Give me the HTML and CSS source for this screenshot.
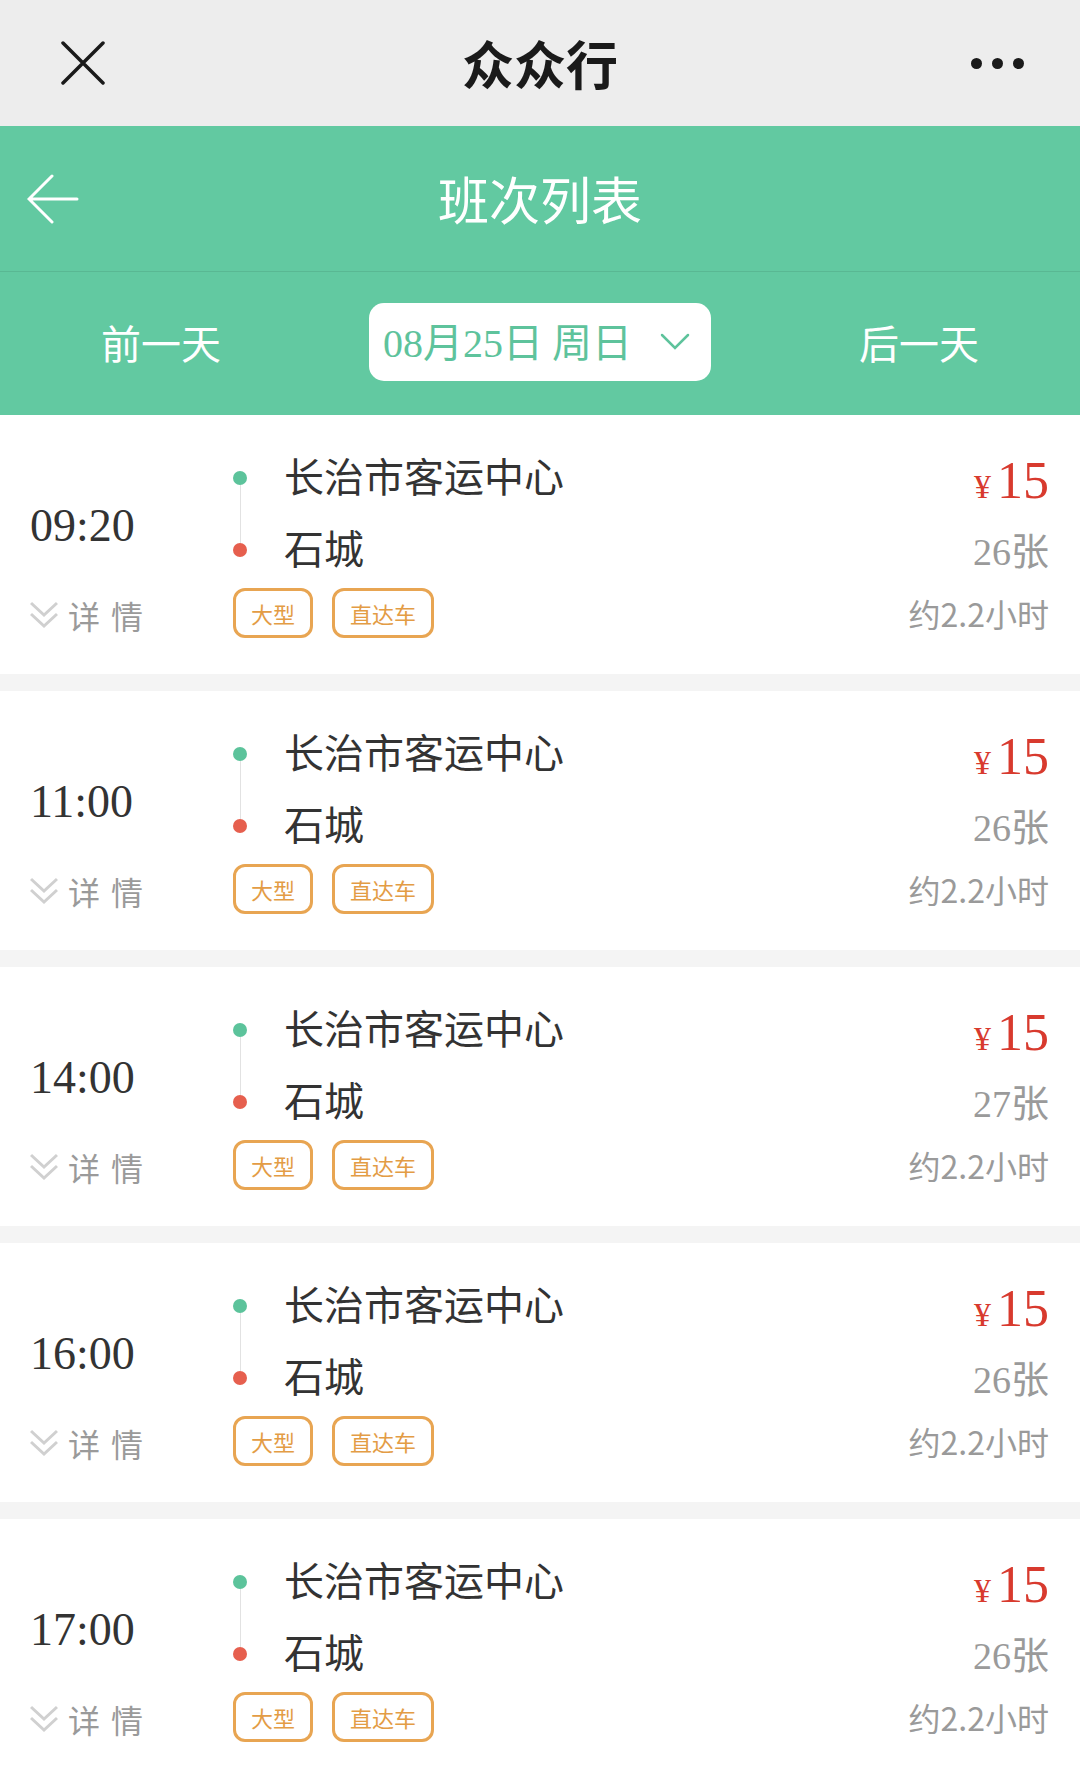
FILE: index.html
```html
<!DOCTYPE html>
<html lang="zh-CN">
    <head>
        <meta charset="UTF-8">
        <title>众众行</title>
        <link rel="stylesheet" href="styles.css">
    </head>

    <body>
        <div class="topbar">
            <svg class="close-icon" width="44" height="44" viewBox="0 0 44 44">
                <path d="M2 2 L42 42 M42 2 L2 42" stroke="#1a1a1a" stroke-width="3.5" stroke-linecap="round"/>
            </svg>
            <div class="app-title">众众行</div>
            <div class="more"><span></span><span></span><span></span></div>
        </div>

        <div class="header">
            <svg class="back" width="52" height="50" viewBox="0 0 52 50">
                <path d="M50 25 H3 M25 2 L2 25 L25 48" fill="none" stroke="#fff" stroke-width="3" stroke-linecap="round"/>
            </svg>
            <h1>班次列表</h1>
            <div></div>
        </div>

        <div class="datebar">
            <span class="day-link">前一天</span>
            <div class="date-pill">
                <span class="date-text"><span class="num">08</span>月<span class="num">25</span>日 周日</span>
                <svg width="30" height="18" viewBox="0 0 30 18">
                    <polyline points="2,2 15,15 28,2" fill="none" stroke="#5ec39c" stroke-width="2.5" stroke-linecap="round"/>
                </svg>
            </div>
            <span class="day-link">后一天</span>
        </div>

        <div class="list">
            <div class="trip">
                <div class="trip-left">
                    <div class="depart">09:20</div>
                    <div class="detail">
                        <svg width="28" height="28" viewBox="0 0 28 28"><path d="M1 2 L14 14 L27 2 M1 13 L14 25 L27 13" fill="none" stroke="#d0d0d0" stroke-width="3"/></svg>
                        <span>详情</span>
                    </div>
                </div>
                <div class="trip-mid">
                    <div class="route">
                        <div class="track"><i class="dot dot-start"></i><i class="track-line"></i><i class="dot dot-end"></i></div>
                        <div class="stops">
                            <div class="stop">长治市客运中心</div>
                            <div class="stop">石城</div>
                        </div>
                    </div>
                    <div class="tags"><span class="tag">大型</span><span class="tag">直达车</span></div>
                </div>
                <div class="trip-right">
                    <div class="price"><span class="yen">¥</span>15</div>
                    <div class="seats"><span class="num">26</span>张</div>
                    <div class="duration">约2.2小时</div>
                </div>
            </div>

            <div class="trip">
                <div class="trip-left">
                    <div class="depart">11:00</div>
                    <div class="detail">
                        <svg width="28" height="28" viewBox="0 0 28 28"><path d="M1 2 L14 14 L27 2 M1 13 L14 25 L27 13" fill="none" stroke="#d0d0d0" stroke-width="3"/></svg>
                        <span>详情</span>
                    </div>
                </div>
                <div class="trip-mid">
                    <div class="route">
                        <div class="track"><i class="dot dot-start"></i><i class="track-line"></i><i class="dot dot-end"></i></div>
                        <div class="stops">
                            <div class="stop">长治市客运中心</div>
                            <div class="stop">石城</div>
                        </div>
                    </div>
                    <div class="tags"><span class="tag">大型</span><span class="tag">直达车</span></div>
                </div>
                <div class="trip-right">
                    <div class="price"><span class="yen">¥</span>15</div>
                    <div class="seats"><span class="num">26</span>张</div>
                    <div class="duration">约2.2小时</div>
                </div>
            </div>

            <div class="trip">
                <div class="trip-left">
                    <div class="depart">14:00</div>
                    <div class="detail">
                        <svg width="28" height="28" viewBox="0 0 28 28"><path d="M1 2 L14 14 L27 2 M1 13 L14 25 L27 13" fill="none" stroke="#d0d0d0" stroke-width="3"/></svg>
                        <span>详情</span>
                    </div>
                </div>
                <div class="trip-mid">
                    <div class="route">
                        <div class="track"><i class="dot dot-start"></i><i class="track-line"></i><i class="dot dot-end"></i></div>
                        <div class="stops">
                            <div class="stop">长治市客运中心</div>
                            <div class="stop">石城</div>
                        </div>
                    </div>
                    <div class="tags"><span class="tag">大型</span><span class="tag">直达车</span></div>
                </div>
                <div class="trip-right">
                    <div class="price"><span class="yen">¥</span>15</div>
                    <div class="seats"><span class="num">27</span>张</div>
                    <div class="duration">约2.2小时</div>
                </div>
            </div>

            <div class="trip">
                <div class="trip-left">
                    <div class="depart">16:00</div>
                    <div class="detail">
                        <svg width="28" height="28" viewBox="0 0 28 28"><path d="M1 2 L14 14 L27 2 M1 13 L14 25 L27 13" fill="none" stroke="#d0d0d0" stroke-width="3"/></svg>
                        <span>详情</span>
                    </div>
                </div>
                <div class="trip-mid">
                    <div class="route">
                        <div class="track"><i class="dot dot-start"></i><i class="track-line"></i><i class="dot dot-end"></i></div>
                        <div class="stops">
                            <div class="stop">长治市客运中心</div>
                            <div class="stop">石城</div>
                        </div>
                    </div>
                    <div class="tags"><span class="tag">大型</span><span class="tag">直达车</span></div>
                </div>
                <div class="trip-right">
                    <div class="price"><span class="yen">¥</span>15</div>
                    <div class="seats"><span class="num">26</span>张</div>
                    <div class="duration">约2.2小时</div>
                </div>
            </div>

            <div class="trip">
                <div class="trip-left">
                    <div class="depart">17:00</div>
                    <div class="detail">
                        <svg width="28" height="28" viewBox="0 0 28 28"><path d="M1 2 L14 14 L27 2 M1 13 L14 25 L27 13" fill="none" stroke="#d0d0d0" stroke-width="3"/></svg>
                        <span>详情</span>
                    </div>
                </div>
                <div class="trip-mid">
                    <div class="route">
                        <div class="track"><i class="dot dot-start"></i><i class="track-line"></i><i class="dot dot-end"></i></div>
                        <div class="stops">
                            <div class="stop">长治市客运中心</div>
                            <div class="stop">石城</div>
                        </div>
                    </div>
                    <div class="tags"><span class="tag">大型</span><span class="tag">直达车</span></div>
                </div>
                <div class="trip-right">
                    <div class="price"><span class="yen">¥</span>15</div>
                    <div class="seats"><span class="num">26</span>张</div>
                    <div class="duration">约2.2小时</div>
                </div>
            </div>
        </div>
    </body>
</html>
```

FILE: styles.css
```css
html {
    background-color: #f4f4f4;
}

body {
    margin: 0;
    font-family: "Noto Sans CJK SC", "Noto Sans", sans-serif;
    color: #333;
}

.num {
    font-family: "Liberation Serif", serif;
}

/* top app bar */
.topbar {
    display: grid;
    grid-template-columns: 1fr auto 1fr;
    align-items: center;
    height: 126px;
    padding: 0 56px;
    background-color: #ededed;
}

.close-icon {
    justify-self: start;
    margin-left: 5px;
}

.app-title {
    font-size: 52px;
    font-weight: bold;
    color: #1a1a1a;
    line-height: 1;
}

.more {
    justify-self: end;
    display: flex;
    gap: 10px;
}

.more span {
    width: 11px;
    height: 11px;
    border-radius: 50%;
    background-color: #1a1a1a;
}

/* green header */
.header {
    display: grid;
    grid-template-columns: 1fr auto 1fr;
    align-items: center;
    box-sizing: border-box;
    height: 146px;
    padding: 0 27px;
    background-color: #62c9a1;
    border-bottom: 1px solid #59b893;
}

.header h1 {
    margin: 0;
    font-size: 51px;
    font-weight: normal;
    color: #fff;
    line-height: 1;
}

.datebar {
    display: flex;
    justify-content: space-between;
    align-items: center;
    box-sizing: border-box;
    height: 143px;
    padding: 0 101px 4px;
    background-color: #62c9a1;
}

.day-link {
    font-size: 40px;
    line-height: 1;
    color: #fff;
}

.date-pill {
    display: flex;
    justify-content: space-between;
    align-items: center;
    box-sizing: border-box;
    width: 342px;
    height: 78px;
    padding: 0 21px 0 14px;
    background-color: #fff;
    border-radius: 15px;
}

.date-text {
    font-size: 40px;
    line-height: 1;
    color: #5ec39c;
}

/* trip cards */
.trip {
    display: flex;
    box-sizing: border-box;
    height: 259px;
    margin-bottom: 17px;
    padding: 27px 31px 34px 30px;
    background-color: #fff;
}

.trip-left {
    display: flex;
    flex-direction: column;
    width: 203px;
    padding-top: 56px;
}

.depart {
    font-family: "Liberation Serif", serif;
    font-size: 46px;
    line-height: 56px;
    color: #333;
}

.detail {
    display: flex;
    align-items: center;
    height: 40px;
    margin-top: 41px;
    gap: 10px;
}

.detail span {
    font-size: 32px;
    letter-spacing: 11px;
    color: #9a9a9a;
}

.trip-mid {
    flex: 1;
}

.route {
    display: flex;
}

.track {
    display: flex;
    flex-direction: column;
    align-items: center;
    width: 14px;
    padding-top: 29px;
}

.dot {
    width: 14px;
    height: 14px;
    border-radius: 50%;
}

.dot-start {
    background-color: #5cc39b;
}

.dot-end {
    background-color: #e65f4e;
}

.track-line {
    width: 1px;
    height: 58px;
    background-color: #e2e2e2;
}

.stops {
    margin: -3px 0 3px 37px;
}

.stop {
    font-size: 40px;
    line-height: 72px;
    color: #333;
}

.tags {
    display: flex;
    gap: 19px;
    margin-top: 2px;
}

.tag {
    box-sizing: border-box;
    height: 50px;
    padding: 0 15px;
    border: 3px solid #e8a552;
    border-radius: 12px;
    font-size: 22px;
    line-height: 44px;
    color: #e39c45;
}

.trip-right {
    display: flex;
    flex-direction: column;
    align-items: flex-end;
}

.price {
    font-family: "Liberation Serif", serif;
    font-size: 52px;
    line-height: 78px;
    height: 78px;
    color: #d83a2e;
}

.yen {
    font-size: 34px;
    line-height: 1;
    margin-right: 6px;
}

.seats {
    font-size: 38px;
    line-height: 58px;
    height: 58px;
    color: #9a9a9a;
}

.duration {
    font-size: 32px;
    line-height: 54px;
    margin-top: 8px;
    color: #9a9a9a;
}
```
